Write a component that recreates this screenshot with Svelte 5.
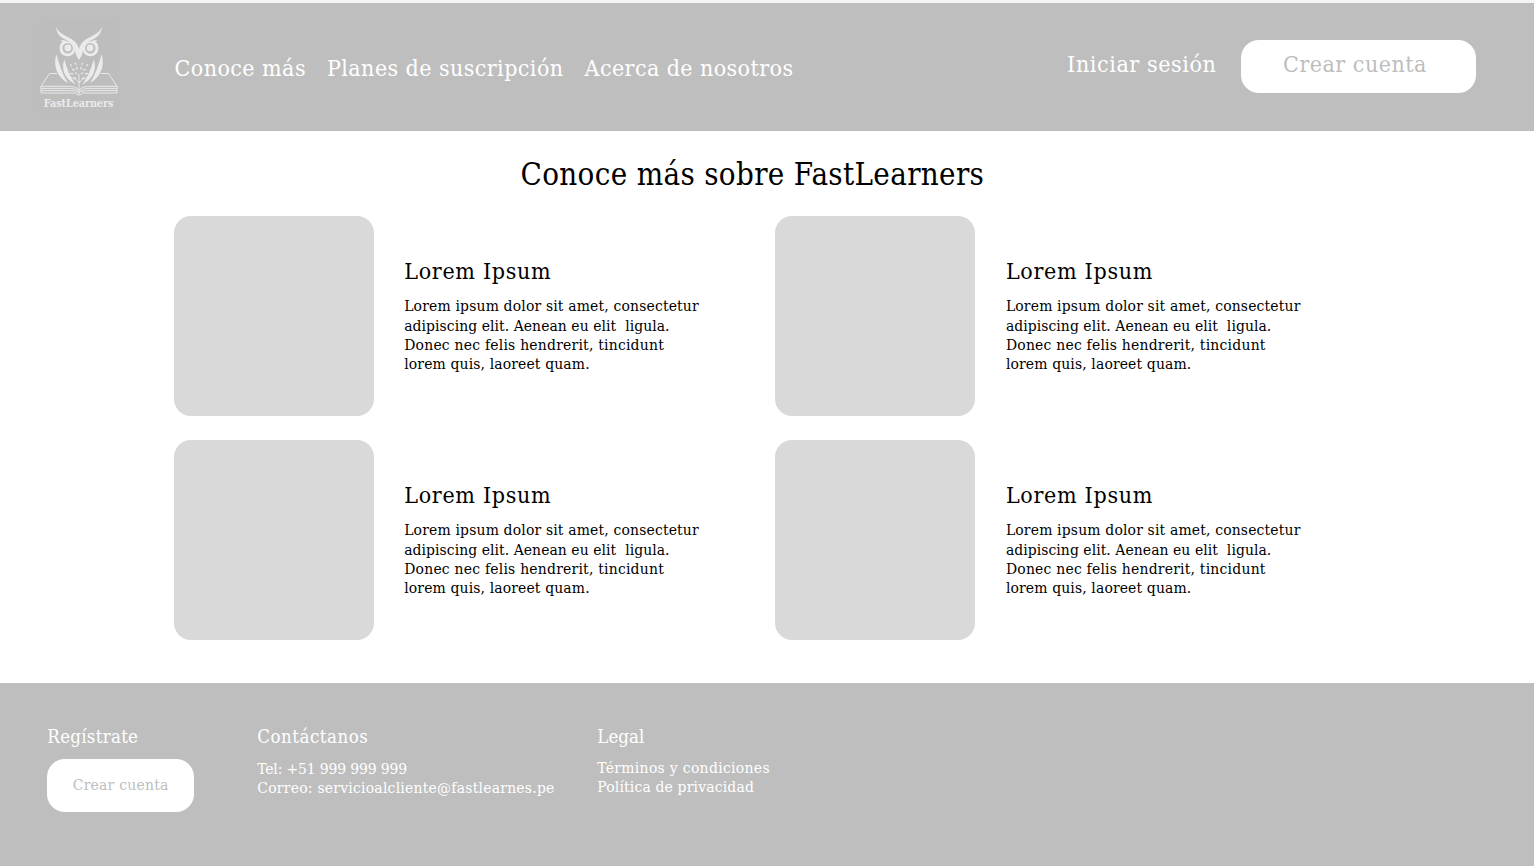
<script>
  const nav = [
    { text: 'Conoce más', ls: 0.44 },
    { text: 'Planes de suscripción', ls: 0.43 },
    { text: 'Acerca de nosotros', ls: 0.42 },
  ];
  const lines = [
    { text: 'Lorem ipsum dolor sit amet, consectetur', ls: 0.17 },
    { text: 'adipiscing elit. Aenean eu elit  ligula.', ls: 0.06 },
    { text: 'Donec nec felis hendrerit, tincidunt', ls: 0.22 },
    { text: 'lorem quis, laoreet quam.', ls: 0.14 },
  ];
  const cards = [1, 2, 3, 4];
</script>

<div class="page">
  <header>
    <svg class="logo" viewBox="38 20 82 100" width="82" height="100" aria-label="FastLearners">
      <rect x="38" y="20" width="82" height="100" rx="9" fill="#bdbdbd" />
      <defs>
        <g id="half">
          <path fill="#ebebeb" d="M56 26.5C58 33 65 35.5 70.5 38.5C75.500 41.200 77.500 44.500 79 49V60C77 57 75.600 54.500 75.200 51.500C74.500 44.500 70 41.500 65 39.200C59.500 36.500 56.500 33 56 26.5Z" />
          <path fill="#ebebeb" fill-rule="evenodd" d="M60.500 40C64 39.800 70 41.500 73.300 44.500C77.300 50.500 73.500 56.300 67.700 56.300C62.500 56.300 59.300 52 59.600 48C59.700 45 61 42.500 62.500 41.500ZM67.700 43A5.200 5.200 0 1 0 67.700 53.400A5.200 5.200 0 1 0 67.700 43Z" />
          <circle cx="67.900" cy="47.900" r="3.400" fill="#ebebeb" />
          <path fill="#ebebeb" d="M56.300 54.500C53.500 64 55.500 76 68 83C62 74 59.500 64 56.300 54.500Z" />
          <path fill="#ebebeb" d="M64.300 59.500C61.500 67 63 78 75.800 84.500C70 77 67 69 64.300 59.500Z" />
          <path fill="none" stroke="#e6e6e6" stroke-width="1.300" stroke-linecap="round" d="M70.500 64.500l.8 1.500M75.300 63l.8 1.300M72.500 69.500l2.300.4M76.500 67.300l1 1.500M70.500 73.500l2.500.3M75.300 72.800l1.500 1M74 77.500l2 1" />
          <g fill="none" stroke="#e9e9e9" stroke-width="1">
            <path d="M57 73.500H49.500L41 86.300H68Q76 86.300 79 90" />
            <path d="M69 77.500Q76 78 79 83" />
            <path d="M41 86v7M41 88.400H68Q76 88.400 79 91.500M41 90.600H68Q76 90.600 79 92.700M41 93H75Q77 95 79 95" />
          </g>
        </g>
      </defs>
      <use href="#half" />
      <use href="#half" transform="matrix(-1 0 0 1 158 0)" />
      <path d="M79 74v20" stroke="#e7e7e7" stroke-width="1" />
      <text x="43.800" y="106.800" textLength="69.500" lengthAdjust="spacingAndGlyphs">FastLearners</text>
    </svg>
    <nav>
      {#each nav as item}
        <a href="#top" style:letter-spacing="{item.ls}px">{item.text}</a>
      {/each}
    </nav>
    <a class="login" href="#login">Iniciar sesión</a>
    <button class="signup">Crear cuenta</button>
  </header>

  <main>
    <h1>Conoce más sobre FastLearners</h1>
    <div class="grid">
      {#each cards as card (card)}
        <article>
          <div class="thumb"></div>
          <div class="copy">
            <h2>Lorem Ipsum</h2>
            <p>
              {#each lines as line}
                <span style:letter-spacing="{line.ls}px">{line.text}</span>
              {/each}
            </p>
          </div>
        </article>
      {/each}
    </div>
  </main>

  <footer>
    <section class="register">
      <h3>Regístrate</h3>
      <button>Crear cuenta</button>
    </section>
    <section class="contact">
      <h3>Contáctanos</h3>
      <p>
        <span class="phone">Tel: +51 999 999 999</span>
        <span class="mail">Correo: servicioalcliente@fastlearnes.pe</span>
      </p>
    </section>
    <section class="legal">
      <h3>Legal</h3>
      <p>
        <span class="terms">Términos y condiciones</span>
        <span class="privacy">Política de privacidad</span>
      </p>
    </section>
  </footer>
</div>

<style>
  :global(body) {
    margin: 0;
    background: #fff;
  }
  .page {
    box-sizing: border-box;
    width: 1535px;
    height: 866px;
    padding-right: 1px;
    border-top: 3px solid #f4f4f4;
    display: flex;
    flex-direction: column;
    overflow: hidden;
    font-family: 'DejaVu Serif Condensed', 'DejaVu Serif', 'Liberation Serif', serif;
    font-stretch: condensed;
    color: #000;
  }
  h1, h2, h3, p {
    margin: 0;
    font-weight: 400;
  }
  a {
    color: inherit;
    text-decoration: none;
    white-space: nowrap;
  }
  button {
    display: block;
    border: 0;
    padding: 0;
    background: #fff;
    color: #bebebe;
    font-family: inherit;
    font-stretch: inherit;
    border-radius: 18px;
  }
  header {
    box-sizing: border-box;
    height: 128.3px;
    flex: none;
    display: flex;
    align-items: flex-start;
    padding: 17px 58px 0 38px;
    background: #bebebe;
    color: #fff;
    font-size: 23px;
    line-height: 30px;
  }
  .logo {
    flex: none;
  }
  .logo text {
    font-family: 'DejaVu Serif Condensed', 'DejaVu Serif', serif;
    font-stretch: condensed;
    font-weight: 700;
    font-size: 11px;
    fill: #ebebeb;
  }
  nav {
    display: flex;
    gap: 21px;
    margin: 33px 0 0 54.5px;
  }
  .login {
    margin: 29px 24.500px 0 auto;
    letter-spacing: 0.6px;
  }
  .signup {
    width: 235px;
    height: 53px;
    margin-top: 20px;
    padding-bottom: 6px;
    padding-right: 7px;
    font-size: 23px;
    letter-spacing: 0.49px;
  }
  main {
    height: 552px;
    flex: none;
  }
  h1 {
    margin: 22.7px 0 0 520.5px;
    font-size: 31px;
    line-height: 40px;
    letter-spacing: 0.33px;
    white-space: nowrap;
  }
  .grid {
    display: grid;
    grid-template-columns: 601.7px 601.7px;
    row-gap: 24px;
    margin: 22.3px 0 0 173.700px;
  }
  article {
    display: flex;
    gap: 30.500px;
  }
  .thumb {
    width: 200px;
    height: 200px;
    border-radius: 17px;
    background: #d9d9d9;
  }
  .copy {
    padding-top: 39.700px;
  }
  h2 {
    font-size: 23px;
    line-height: 30px;
    letter-spacing: 0.7px;
  }
  p {
    font-size: 15.5px;
    line-height: 19.2px;
  }
  p span {
    display: block;
    white-space: pre;
  }
  .copy p {
    margin-top: 11.5px;
  }
  footer {
    flex: 1;
    display: flex;
    align-items: flex-start;
    padding: 41.300px 0 0 47.300px;
    background: #bebebe;
    color: #fff;
  }
  h3 {
    font-size: 18.5px;
    line-height: 24px;
    letter-spacing: 0.3px;
  }
  .register {
    width: 210px;
  }
  .register button {
    width: 146.700px;
    height: 53px;
    margin-top: 10px;
    font-size: 15.5px;
    letter-spacing: 0.24px;
  }
  .contact {
    width: 340px;
    padding-top: 0.800px;
  }
  .contact h3 {
    letter-spacing: 0.52px;
  }
  .legal h3 {
    letter-spacing: 0.05px;
  }
  footer p {
    margin-top: 10.500px;
  }
  .phone {
    letter-spacing: -0.14px;
  }
  .mail {
    letter-spacing: 0.24px;
  }
  .terms {
    letter-spacing: 0.32px;
  }
  .privacy {
    letter-spacing: 0.17px;
  }
</style>
